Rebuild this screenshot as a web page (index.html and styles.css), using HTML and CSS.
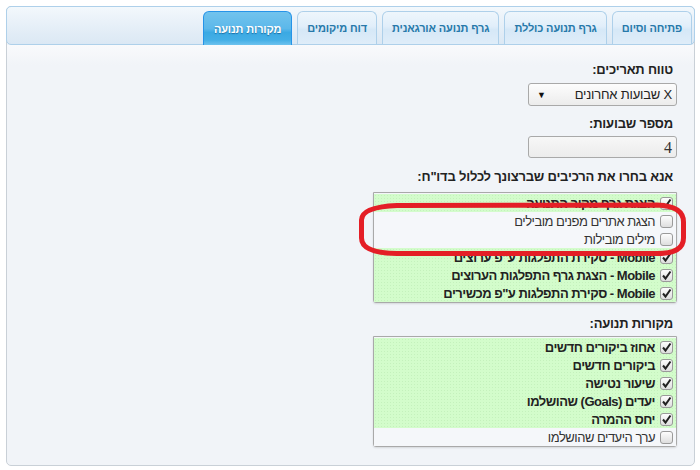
FILE: index.html
```html
<!DOCTYPE html>
<html lang="he" dir="rtl">
<head>
<meta charset="utf-8">
<link rel="stylesheet" href="styles.css">
</head>
<body>
<div class="widget">
  <div class="tabbar">
    <div class="tab">פתיחה וסיום</div>
    <div class="tab">גרף תנועה כוללת</div>
    <div class="tab">גרף תנועה אורגאנית</div>
    <div class="tab">דוח מיקומים</div>
    <div class="tab active">מקורות תנועה</div>
  </div>
  <div class="content">
    <div class="label">טווח תאריכים:</div>
    <div class="select"><span class="select-text">X שבועות אחרונים</span><span class="arrow">▼</span></div>
    <div class="label l2">מספר שבועות:</div>
    <div class="input">4</div>
    <div class="label l3">אנא בחרו את הרכיבים שברצונך לכלול בדו"ח:</div>
    <div class="listwrap">
      <div class="list">
        <div class="row on"><span class="cb"><svg viewBox="0 0 13 13" width="13" height="13"><path d="M3 6.5 L5.5 9.5 L10.5 2.5" fill="none" stroke="#222" stroke-width="2"/></svg></span><span class="txt">הצגת גרף מקור התנועה</span></div>
        <div class="row"><span class="cb"></span><span class="txt">הצגת אתרים מפנים מובילים</span></div>
        <div class="row"><span class="cb"></span><span class="txt">מילים מובילות</span></div>
        <div class="row on"><span class="cb"><svg viewBox="0 0 13 13" width="13" height="13"><path d="M3 6.5 L5.5 9.5 L10.5 2.5" fill="none" stroke="#222" stroke-width="2"/></svg></span><span class="txt">Mobile - סקירת התפלגות ע"פ ערוצים</span></div>
        <div class="row on"><span class="cb"><svg viewBox="0 0 13 13" width="13" height="13"><path d="M3 6.5 L5.5 9.5 L10.5 2.5" fill="none" stroke="#222" stroke-width="2"/></svg></span><span class="txt">Mobile - הצגת גרף התפלגות הערוצים</span></div>
        <div class="row on"><span class="cb"><svg viewBox="0 0 13 13" width="13" height="13"><path d="M3 6.5 L5.5 9.5 L10.5 2.5" fill="none" stroke="#222" stroke-width="2"/></svg></span><span class="txt">Mobile - סקירת התפלגות ע"פ מכשירים</span></div>
      </div>
      <svg class="mark" width="336" height="60" viewBox="0 0 336 60"><path d="M40 5.5 L300 5 Q326.5 6 326.5 22 L326.5 38 Q326.5 53.5 300 53.5 L40 53.5 Q4.5 53 4.5 38 L4.5 20 Q4.5 7 40 5.5 Z" fill="none" stroke="#e41e26" stroke-width="5"/></svg>
    </div>
    <div class="label l4">מקורות תנועה:</div>
    <div class="list">
      <div class="row on"><span class="cb"><svg viewBox="0 0 13 13" width="13" height="13"><path d="M3 6.5 L5.5 9.5 L10.5 2.5" fill="none" stroke="#222" stroke-width="2"/></svg></span><span class="txt">אחוז ביקורים חדשים</span></div>
      <div class="row on"><span class="cb"><svg viewBox="0 0 13 13" width="13" height="13"><path d="M3 6.5 L5.5 9.5 L10.5 2.5" fill="none" stroke="#222" stroke-width="2"/></svg></span><span class="txt">ביקורים חדשים</span></div>
      <div class="row on"><span class="cb"><svg viewBox="0 0 13 13" width="13" height="13"><path d="M3 6.5 L5.5 9.5 L10.5 2.5" fill="none" stroke="#222" stroke-width="2"/></svg></span><span class="txt">שיעור נטישה</span></div>
      <div class="row on"><span class="cb"><svg viewBox="0 0 13 13" width="13" height="13"><path d="M3 6.5 L5.5 9.5 L10.5 2.5" fill="none" stroke="#222" stroke-width="2"/></svg></span><span class="txt">יעדים (Goals) שהושלמו</span></div>
      <div class="row on"><span class="cb"><svg viewBox="0 0 13 13" width="13" height="13"><path d="M3 6.5 L5.5 9.5 L10.5 2.5" fill="none" stroke="#222" stroke-width="2"/></svg></span><span class="txt">יחס ההמרה</span></div>
      <div class="row"><span class="cb"></span><span class="txt">ערך היעדים שהושלמו</span></div>
    </div>
  </div>
</div>
</body>
</html>
```
FILE: styles.css
```css
html, body {
  margin: 0;
  padding: 0;
  background: #fff;
}
body {
  font-family: "Liberation Sans", Arial, sans-serif;
  color: #222;
}
.widget {
  margin: 6px 5px 0 6px;
  height: 458px;
  border: 1px solid #c9d0d7;
  border-radius: 5px;
  background: #f1f4f8;
}
.tabbar {
  margin: -1px -1px 0 -1px;
  height: 33px;
  padding: 4px 2px 0 0;
  border: 1px solid #aed0ea;
  border-radius: 5px;
  background: linear-gradient(#f3f8fc, #e4eef7 60%, #dbe8f4);
  display: flex;
  gap: 5px;
  align-items: flex-end;
}
.tab {
  height: 32px;
  padding: 0 9px;
  border: 1px solid #aed0ea;
  border-bottom: none;
  border-radius: 6px 6px 0 0;
  background: linear-gradient(#eef6fc, #e1eefa 45%, #d6e8f7 55%, #dfedf9);
  color: #2779aa;
  font-weight: bold;
  font-size: 11px;
  letter-spacing: -0.15px;
  display: flex;
  align-items: center;
  white-space: nowrap;
}
.tab.active {
  height: 33px;
  margin-bottom: -1px;
  border-color: #2694e8;
  background: linear-gradient(#72c3ed, #5cb8ea 50%, #3ba9e3 62%, #44afe6 85%, #6ec2ee);
  color: #fff;
  text-shadow: 0 1px 1px #1b6fa5;
  padding: 0 10px;
}
.content {
  padding: 17px 17px 0 0;
  display: flex;
  flex-direction: column;
  align-items: flex-start;
  background: linear-gradient(#f9fafc, #f1f4f8 20px);
}
.label {
  font-weight: bold;
  font-size: 13px;
  letter-spacing: -0.2px;
  line-height: 16px;
  margin-right: 4px;
  margin-bottom: 5px;
}
.l2 { margin-top: 10px; margin-bottom: 4px; }
.l3 { margin-top: 11px; margin-bottom: 7px; }
.l4 { margin-top: 13px; margin-bottom: 4px; }
.select {
  height: 21px;
  border: 1px solid #a9a9a9;
  border-radius: 3px;
  background: linear-gradient(#fdfdfd, #ececec);
  display: flex;
  align-items: center;
  justify-content: space-between;
  padding: 0 4px 0 8px;
  width: 135px;
  font-size: 13px;
  letter-spacing: -0.2px;
}
.select-text { color: #222; }
.arrow { font-size: 9px; color: #111; }
.input {
  width: 140px;
  height: 20px;
  border: 1px solid #a9a9a9;
  border-radius: 3px;
  background: linear-gradient(#f7f7f7, #ececec);
  padding: 0 4px 0 3px;
  font-family: "Liberation Serif", "Times New Roman", serif;
  font-size: 16px;
  line-height: 21px;
  color: #333;
}
.listwrap {
  position: relative;
}
.list {
  width: 302px;
  border: 1px solid #a9a9a9;
  border-radius: 0 0 3px 3px;
  box-shadow: 0 1px 2px rgba(0,0,0,0.12);
  background: #f4f6f9;
  padding: 1px 0 0 0;
}
.row {
  height: 18px;
  display: flex;
  align-items: center;
  font-size: 13px;
  letter-spacing: -0.5px;
  color: #333;
  background: #f5f7fa;
}
.row.on {
  background-color: #d3fccb;
  background-image: radial-gradient(rgba(170,220,160,0.35) 0.6px, transparent 0.8px);
  background-size: 3px 3px;
  font-weight: bold;
  color: #222;
}
.cb {
  width: 11px;
  height: 11px;
  margin: 0 3px 0 5px;
  border: 1px solid #9a9a9a;
  border-radius: 3px;
  background: linear-gradient(#fdfdfd, #dedede);
  position: relative;
  flex: none;
}
.cb svg {
  position: absolute;
  top: -1px;
  right: -1px;
}
.txt {
  white-space: nowrap;
}
.mark {
  position: absolute;
  left: -16px;
  top: 8px;
  pointer-events: none;
}
```
